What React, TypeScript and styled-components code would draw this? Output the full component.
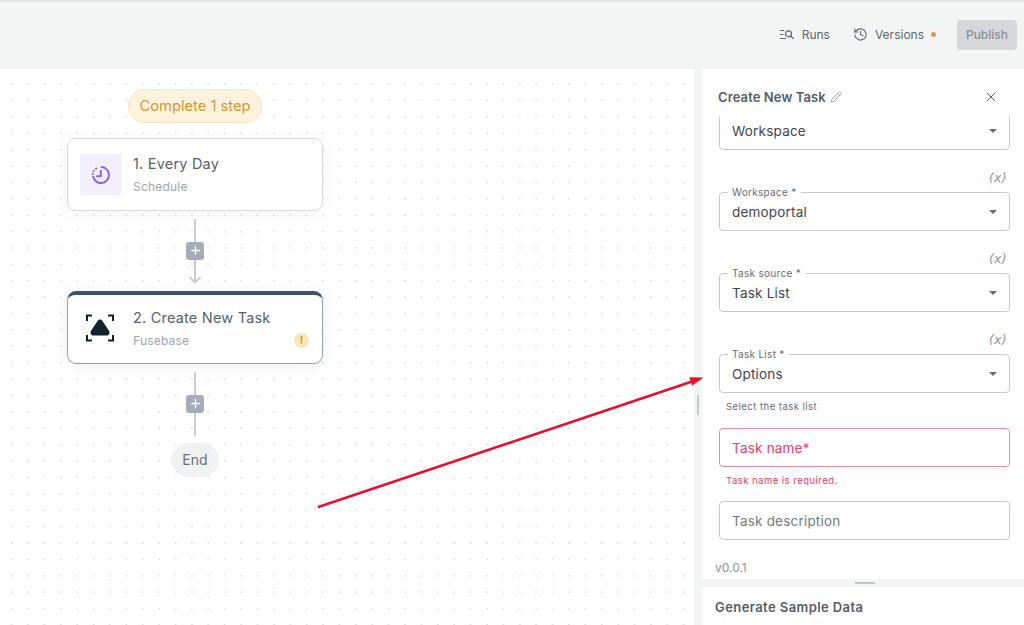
import React from "react";
import styled, { createGlobalStyle } from "styled-components";
import { History, Pencil, X, Plus } from "lucide-react";

const Global = createGlobalStyle`
  html, body { margin: 0; padding: 0; height: 100%; background: #f3f5f5; }
  * { box-sizing: border-box; }
  body { font-family: Inter, "Liberation Sans", sans-serif; overflow: hidden; }
`;

const Page = styled.div`
  position: relative;
  width: 1024px;
  height: 625px;
  display: flex;
  flex-direction: column;
  background: #f3f5f5;
  border-top: 2px solid #e4e6e7;
  overflow: hidden;
`;

const TopBar = styled.header`
  height: 67px;
  flex: none;
  display: flex;
  align-items: flex-start;
  justify-content: flex-end;
  padding: 18px 7px 0 0;
`;

const TopAction = styled.div<{ $gap: number; $mr: number }>`
  height: 29px;
  display: flex;
  align-items: center;
  gap: ${(p) => p.$gap}px;
  margin-right: ${(p) => p.$mr}px;
  font-size: 12px;
  letter-spacing: 0;
  color: #5f6670;
`;

const Dot = styled.span`
  width: 5px;
  height: 5px;
  border-radius: 50%;
  background: #e0964a;
`;

const PublishButton = styled.button`
  width: 60px;
  height: 30px;
  border: 0;
  padding: 0 0 1px;
  border-radius: 4px;
  background: #d5d7da;
  color: #8b9098;
  font: 500 12px Inter, "Liberation Sans", sans-serif;
  letter-spacing: 0;
`;

const Body = styled.div`
  flex: 1;
  display: flex;
  min-height: 0;
`;

const Canvas = styled.main`
  width: 694px;
  flex: none;
  background-color: #ffffff;
  background-image: radial-gradient(circle at 1px 1px, #e3e5e7 1px, transparent 1.4px);
  background-size: 16.4px 16.4px;
  background-position: 10.7px 14.1px;
  padding: 20px 0 0 67px;
`;

const Flow = styled.div`
  width: 256px;
  display: flex;
  flex-direction: column;
  align-items: center;
`;

const StatusPill = styled.div`
  width: 134px;
  height: 34px;
  display: flex;
  align-items: center;
  justify-content: center;
  border-radius: 17px;
  background: #fdf3dd;
  border: 1px solid #f8e4bd;
  color: #d29a34;
  font-size: 14.7px;
  padding-bottom: 1px;
  margin-bottom: 15px;
`;

const Node = styled.div<{ $active?: boolean }>`
  width: 256px;
  height: 73px;
  display: flex;
  align-items: center;
  padding-left: 12px;
  gap: 12px;
  background: #fff;
  border-radius: 9px;
  border: 1px solid ${(p) => (p.$active ? "#98a1ab" : "#d7dadd")};
  border-top: ${(p) => (p.$active ? "4px solid #3d5364" : "1px solid #d7dadd")};
  box-shadow: 0 2px 14px rgba(120, 130, 140, ${(p) => (p.$active ? 0.16 : 0.1)});
  position: relative;
`;

const IconTile = styled.div<{ $tint?: boolean }>`
  width: 41px;
  height: 41px;
  flex: none;
  display: flex;
  align-items: center;
  justify-content: center;
  background: ${(p) => (p.$tint ? "#f3effe" : "transparent")};
`;

const NodeText = styled.div`
  display: flex;
  flex-direction: column;
  gap: 6px;
`;

const NodeTitle = styled.div`
  font-size: 14.5px;
  line-height: 18px;
  letter-spacing: 0.2px;
  color: #5a5f66;
`;

const NodeSub = styled.div`
  font-size: 12px;
  line-height: 16px;
  letter-spacing: 0.2px;
  color: #a1a5ab;
`;

const Warn = styled.div`
  position: absolute;
  right: 13px;
  bottom: 15px;
  width: 15px;
  height: 15px;
  border-radius: 50%;
  background: #f8e6b8;
  color: #c9962f;
  font-size: 10px;
  font-weight: 700;
  line-height: 15px;
  text-align: center;
`;

const Connector = styled.div<{ $bottom: number }>`
  position: relative;
  width: 18px;
  height: 64px;
  margin: 8px 0 ${(p) => p.$bottom}px;
  display: flex;
  align-items: center;
  justify-content: center;
  &::before {
    content: "";
    position: absolute;
    left: 8px;
    top: 0;
    bottom: 0;
    width: 2px;
    background: #cbcdcf;
  }
`;

const ArrowHead = styled.svg`
  position: absolute;
  left: 3px;
  bottom: -1px;
`;

const AddButton = styled.div`
  position: relative;
  width: 18px;
  height: 18px;
  border-radius: 3px;
  background: #a4aebb;
  color: #fff;
  display: flex;
  align-items: center;
  justify-content: center;
  margin-top: -1px;
`;

const EndPill = styled.div`
  width: 48px;
  height: 34px;
  border-radius: 17px;
  background: #eff1f2;
  color: #6b7077;
  font-size: 14px;
  padding-bottom: 1px;
  display: flex;
  align-items: center;
  justify-content: center;
`;

const Gutter = styled.div`
  width: 8px;
  flex: none;
  display: flex;
  align-items: flex-start;
  justify-content: center;
  padding-top: 326px;
`;

const GutterHandle = styled.div`
  width: 2.5px;
  height: 20px;
  background: #c4c7ca;
`;

const Panel = styled.aside`
  flex: 1;
  display: flex;
  flex-direction: column;
  background: #fff;
  min-width: 0;
`;

const PanelHeader = styled.div`
  height: 47px;
  flex: none;
  display: flex;
  align-items: center;
  padding: 9px 25px 0 16px;
  color: #565c64;
`;

const PanelTitle = styled.div`
  font-size: 13px;
  font-weight: 600;
  letter-spacing: 0.1px;
  margin-right: 4px;
`;

const CloseSlot = styled.div`
  margin-left: auto;
  display: flex;
  color: #5c6168;
`;

const FormScroll = styled.div`
  flex: 1;
  min-height: 0;
  overflow: hidden;
  display: flex;
  flex-direction: column;
  justify-content: flex-end;
  padding: 0 14px 0 13px;
`;

const Field = styled.div<{ $error?: boolean }>`
  position: relative;
  flex: none;
  width: 291px;
  height: 39px;
  margin-left: 4px;
  display: flex;
  align-items: center;
  padding: 0 12px;
  border-radius: 4px;
  border: 1px solid ${(p) => (p.$error ? "#ec8b9b" : "#c6c9cd")};
  font-size: 13.5px;
  letter-spacing: 0.2px;
  color: ${(p) => (p.$error ? "#e8415f" : "#3d4650")};
`;

const Placeholder = styled.span`
  color: #74797f;
`;

const FloatLabel = styled.span`
  position: absolute;
  top: -6px;
  left: 8px;
  padding: 0 4px;
  background: #fff;
  font-size: 10px;
  line-height: 11px;
  letter-spacing: 0.3px;
  color: #666c74;
`;

const Caret = styled.span`
  position: absolute;
  right: 12px;
  top: 50%;
  margin-top: -2px;
  border-left: 4.5px solid transparent;
  border-right: 4.5px solid transparent;
  border-top: 4.5px solid #666c74;
`;

const VarRow = styled.div`
  flex: none;
  height: 42px;
  width: 291px;
  margin-left: 4px;
  padding: 19px 3px 0 0;
  text-align: right;
  font: italic 12.5px/18px "DejaVu Sans", "Liberation Sans", sans-serif;
  letter-spacing: 0.3px;
  color: #8f9399;
`;

const Hint = styled.div<{ $error?: boolean }>`
  flex: none;
  height: ${(p) => (p.$error ? 34 : 35)}px;
  padding: 7px 0 0 11px;
  font-size: 9.5px;
  line-height: 13px;
  letter-spacing: 0.47px;
  color: ${(p) => (p.$error ? "#e8415f" : "#666c74")};
`;

const Version = styled.div`
  flex: none;
  height: 39px;
  padding-top: 20px;
  font-size: 12px;
  line-height: 16px;
  color: #8e9297;
`;

const SplitBar = styled.div`
  flex: none;
  height: 8px;
  background: #f3f5f5;
  display: flex;
  justify-content: center;
  align-items: center;
  padding-left: 4px;
`;

const SplitHandle = styled.div`
  width: 20px;
  height: 2.5px;
  background: #c4c7ca;
`;

const SampleRow = styled.div`
  flex: none;
  height: 38px;
  padding: 12px 0 0 13px;
  font-size: 13px;
  line-height: 16px;
  font-weight: 600;
  letter-spacing: 0.42px;
  color: #565c64;
`;

const Annotation = styled.svg`
  position: absolute;
  left: 0;
  top: -2px;
  pointer-events: none;
`;

const RunsIcon = () => (
  <svg width="16" height="16" viewBox="0 0 16 16" fill="none" stroke="#5f6670" strokeWidth="1.2" strokeLinecap="round">
    <path d="M1.5 3.5h3.5M1.5 7.5h2.5M1.5 11.5h5" />
    <circle cx="9.5" cy="6.8" r="3" />
    <path d="M11.8 9.1l2.4 2.4" />
  </svg>
);

const ClockIcon = () => (
  <svg width="20" height="20" viewBox="0 0 20 20" fill="none" stroke="#8b62ea" strokeWidth="2" strokeLinecap="round" strokeLinejoin="round">
    <path d="M10.500 2a8 8 0 1 1-8.300 9.800" />
    <path d="M1.800 9v-.2M2.700 6l.1-.1M5 3.600l.1-.1" />
    <path d="M9.800 6v5.200H6" />
  </svg>
);

const FusebaseIcon = () => (
  <svg width="30" height="30" viewBox="1 1 30 30" fill="#10222c">
    <path d="M1 8V1.500h6v2H3V8zM29 8V1.500h-6v2h4V8zM1 22v6.500h6v-2H3V22zM29 22v6.500h-6v-2h4V22z" />
    <path d="M12.700 7.700a2.800 2.800 0 0 1 4.600 0l6.500 9.800c1.500 2.300 0.600 5-2.400 5H8.600c-3 0-3.900-2.700-2.400-5z" />
  </svg>
);

export default function App() {
  return (
    <>
      <Global />
      <Page>
        <TopBar>
          <TopAction $gap={7} $mr={23}>
            <RunsIcon />
            <span>Runs</span>
          </TopAction>
          <TopAction $gap={7} $mr={21}>
            <History size={15} strokeWidth={1.7} color="#5f6670" />
            <span>Versions</span>
            <Dot />
          </TopAction>
          <PublishButton>Publish</PublishButton>
        </TopBar>
        <Body>
          <Canvas>
            <Flow>
              <StatusPill>Complete 1 step</StatusPill>
              <Node>
                <IconTile $tint>
                  <ClockIcon />
                </IconTile>
                <NodeText>
                  <NodeTitle>1. Every Day</NodeTitle>
                  <NodeSub>Schedule</NodeSub>
                </NodeText>
              </Node>
              <Connector $bottom={8}>
                <AddButton>
                  <Plus size={13} strokeWidth={2.6} />
                </AddButton>
                <ArrowHead width="12" height="8" viewBox="0 0 12 8" fill="none" stroke="#cbcdcf" strokeWidth="1.8" strokeLinecap="round" strokeLinejoin="round">
                  <path d="M1 1.500l5 5 5-5" />
                </ArrowHead>
              </Connector>
              <Node $active>
                <IconTile>
                  <FusebaseIcon />
                </IconTile>
                <NodeText>
                  <NodeTitle>2. Create New Task</NodeTitle>
                  <NodeSub>Fusebase</NodeSub>
                </NodeText>
                <Warn>!</Warn>
              </Node>
              <Connector $bottom={7}>
                <AddButton>
                  <Plus size={13} strokeWidth={2.6} />
                </AddButton>
              </Connector>
              <EndPill>End</EndPill>
            </Flow>
          </Canvas>
          <Gutter>
            <GutterHandle />
          </Gutter>
          <Panel>
            <PanelHeader>
              <PanelTitle>Create New Task</PanelTitle>
              <Pencil size={12} strokeWidth={1.8} color="#94989e" />
              <CloseSlot>
                <X size={16} strokeWidth={1.5} />
              </CloseSlot>
            </PanelHeader>
            <FormScroll>
              <Field>
                Workspace
                <Caret />
              </Field>
              <VarRow>(x)</VarRow>
              <Field>
                <FloatLabel>Workspace *</FloatLabel>
                demoportal
                <Caret />
              </Field>
              <VarRow>(x)</VarRow>
              <Field>
                <FloatLabel>Task source *</FloatLabel>
                Task List
                <Caret />
              </Field>
              <VarRow>(x)</VarRow>
              <Field>
                <FloatLabel>Task List *</FloatLabel>
                Options
                <Caret />
              </Field>
              <Hint>Select the task list</Hint>
              <Field $error>Task name*</Field>
              <Hint $error>Task name is required.</Hint>
              <Field>
                <Placeholder>Task description</Placeholder>
              </Field>
              <Version>v0.0.1</Version>
            </FormScroll>
            <SplitBar>
              <SplitHandle />
            </SplitBar>
            <SampleRow>Generate Sample Data</SampleRow>
          </Panel>
        </Body>
        <Annotation width="1024" height="625" viewBox="0 0 1024 625">
          <path d="M319 506.800L695 380.500" stroke="#e8112d" strokeWidth="2.6" strokeLinecap="round" fill="none" />
          <path d="M703.500 377.500L689.300 377.300 692.100 385.800z" fill="#e8112d" />
        </Annotation>
      </Page>
    </>
  );
}
